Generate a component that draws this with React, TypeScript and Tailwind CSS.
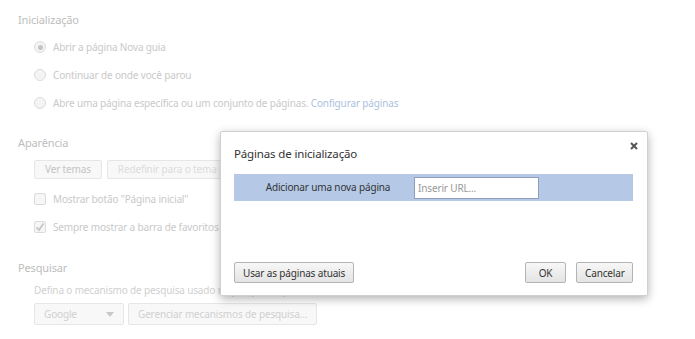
const font = { fontFamily: '"Noto Sans", "Open Sans", sans-serif' }

const Radio = ({ checked, label }: { checked?: boolean; label: React.ReactNode }) => (
    <div className="flex items-center gap-[7px] h-[28px]">
        <span className="w-[12px] h-[12px] rounded-full border border-[#dcdcdc] bg-[#f4f4f4] flex items-center justify-center">
            {checked && <span className="w-[5px] h-[5px] rounded-full bg-[#c4c4c4]" />}
        </span>
        <span>{label}</span>
    </div>
)

const Check = ({ checked, label }: { checked?: boolean; label: string }) => (
    <div className="flex items-center gap-[7px] h-[28px]">
        <span className="w-[12px] h-[12px] rounded-[2px] border border-[#dcdcdc] bg-[#f6f6f6] flex items-center justify-center">
            {checked && (
                <svg width="10" height="10" viewBox="0 0 10 10">
                    <path d="M1.5 5.5 L4 8 L8.5 1.5" stroke="#c6c6c6" strokeWidth="1.8" fill="none" />
                </svg>
            )}
        </span>
        <span>{label}</span>
    </div>
)

const FadedButton = ({ children, className = "" }: { children: React.ReactNode; className?: string }) => (
    <span className={`h-[19px] px-[10px] flex items-center border border-[#e6e6e6] rounded-[2px] bg-[#f8f8f8] ${className}`}>
        {children}
    </span>
)

const DialogButton = ({ children, className = "" }: { children: React.ReactNode; className?: string }) => (
    <button className={`h-[21px] px-[8px] border border-[#b4b4b4] rounded-[2px] bg-gradient-to-b from-[#f7f7f7] to-[#e4e4e4] text-[#333] leading-none ${className}`}>
        {children}
    </button>
)

export default function App() {
    return (
        <div className="relative w-[695px] h-[339px] bg-white overflow-hidden text-[10px] tracking-[-0.15px] text-[#c9c9c9]" style={font}>
            <div className="pl-[18px] pt-[10px]">
                <h3 className="text-[11px] text-[#bdbdbd] h-[20px] leading-[20px]">Inicialização</h3>
                <div className="pl-[16px] pt-[3px]">
                    <Radio checked label="Abrir a página Nova guia" />
                    <Radio label="Continuar de onde você parou" />
                    <Radio
                        label={
                            <>
                                Abre uma página específica ou um conjunto de páginas.{" "}
                                <span className="text-[#adbfe0]">Configurar páginas</span>
                            </>
                        }
                    />
                </div>

                <h3 className="text-[11px] text-[#bdbdbd] h-[20px] leading-[20px] mt-[16px]">Aparência</h3>
                <div className="pl-[16px] pt-[7px]">
                    <div className="flex gap-[5px]">
                        <FadedButton className="text-[#c4c4c4]">Ver temas</FadedButton>
                        <FadedButton className="text-[#dcdcdc]">Redefinir para o tema padrão</FadedButton>
                    </div>
                    <div className="pt-[6px]">
                        <Check label='Mostrar botão "Página inicial"' />
                        <Check checked label="Sempre mostrar a barra de favoritos" />
                    </div>
                </div>

                <h3 className="text-[11px] text-[#bdbdbd] h-[20px] leading-[20px] mt-[17px]">Pesquisar</h3>
                <div className="pl-[16px]">
                    <p className="h-[24px] leading-[24px] text-[#d0d0d0]">Defina o mecanismo de pesquisa usado na pesquisa a partir da omnibox.</p>
                    <div className="flex gap-[4px] mt-[1px]">
                        <span className="w-[90px] h-[22px] px-[9px] flex items-center justify-between border border-[#e6e6e6] rounded-[2px] bg-[#f8f8f8] text-[#d0d0d0]">
                            Google
                            <svg width="8" height="5" viewBox="0 0 8 5">
                                <path d="M0 0 H8 L4 5 Z" fill="#c8c8c8" />
                            </svg>
                        </span>
                        <span className="h-[22px] px-[9px] flex items-center border border-[#e6e6e6] rounded-[2px] bg-[#f8f8f8] text-[#d0d0d0]">
                            Gerenciar mecanismos de pesquisa...
                        </span>
                    </div>
                </div>
            </div>

            {/* dialog */}
            <div className="absolute left-[220px] top-[131px] w-[428px] h-[165px] bg-white border border-[#d0d0d0] rounded-[2px] shadow-[0_3px_10px_rgba(0,0,0,0.3)] pl-[13px] pr-[14px] flex flex-col">
                <svg width="8" height="8" viewBox="0 0 8 8" className="absolute right-[9px] top-[10px]">
                    <path d="M1 1 L7 7 M7 1 L1 7" stroke="#555" strokeWidth="2" />
                </svg>
                <div className="flex items-center h-[42px] pt-[2px]">
                    <span className="text-[11.5px] text-[#333]">Páginas de inicialização</span>
                </div>
                <div className="h-[27px] bg-[#b5c9e7] flex items-center">
                    <span className="w-[180px] pl-[8px] text-center text-[#333]">Adicionar uma nova página</span>
                    <input
                        placeholder="Inserir URL..."
                        className="w-[125px] h-[22px] border border-[#8ea0bd] bg-white px-[3px] text-[10px] placeholder:text-[#999] outline-none"
                    />
                </div>
                <div className="flex-1" />
                <div className="flex items-center pb-[12px]">
                    <DialogButton>Usar as páginas atuais</DialogButton>
                    <div className="flex-1" />
                    <DialogButton className="w-[41px]">OK</DialogButton>
                    <DialogButton className="ml-[10px] w-[57px]">Cancelar</DialogButton>
                </div>
            </div>
        </div>
    )
}
